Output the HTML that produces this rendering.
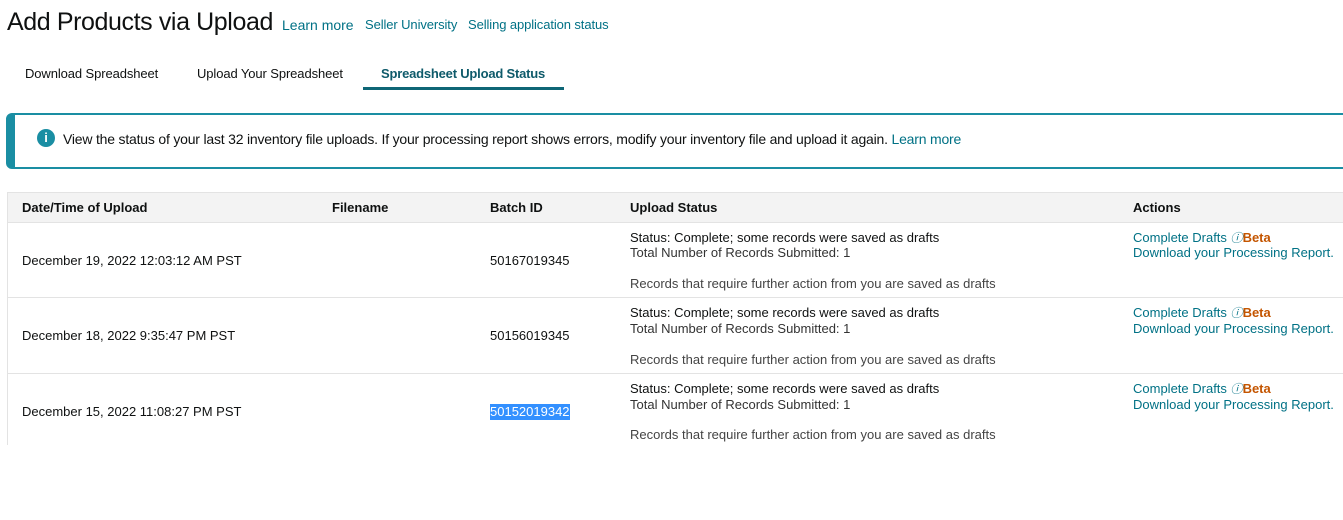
<!DOCTYPE html>
<html><head><meta charset="utf-8"><style>
*{margin:0;padding:0;box-sizing:border-box}
body{width:1343px;height:520px;background:#fff;font-family:"Liberation Sans",sans-serif;color:#0f1111;position:relative;overflow:hidden}
.a{position:absolute;white-space:nowrap;line-height:16px}
.l{color:#007185}
.s{font-size:13px}
.hd{font-size:13px;font-weight:bold;color:#0f1111}
.row{position:absolute;left:7px;width:1340px;border-top:1px solid #e3e3e3}
.ic{font-style:italic;font-size:12px;line-height:12px}
</style></head><body>
<div class="a" style="left:7px;top:8px;font-size:25px;line-height:28px;letter-spacing:-0.4px;color:#0f1111">Add Products via Upload</div>
<div class="a l" style="left:282px;top:17px;font-size:14px">Learn more</div>
<div class="a l" style="left:365px;top:17px;font-size:13px;letter-spacing:-0.1px">Seller University</div>
<div class="a l" style="left:468px;top:17px;font-size:13px;letter-spacing:-0.1px">Selling application status</div>

<div class="a" style="left:25px;top:66px;font-size:13px;letter-spacing:-0.1px">Download Spreadsheet</div>
<div class="a" style="left:197px;top:66px;font-size:13px;letter-spacing:-0.1px">Upload Your Spreadsheet</div>
<div class="a" style="left:381px;top:66px;font-size:13px;font-weight:bold;color:#0e5a6a;letter-spacing:-0.2px">Spreadsheet Upload Status</div>
<div class="a" style="left:363px;top:87px;width:201px;height:3px;background:#0e6676"></div>

<div class="a" style="left:6px;top:113px;width:1345px;height:56px;border:2px solid #1a8ea3;border-left:9px solid #1a8ea3;border-radius:6px 0 0 6px"></div>
<div class="a" style="left:37px;top:129px;width:18px;height:18px;border-radius:50%;background:#1a8ea3;color:#fff;font-weight:bold;font-size:13px;text-align:center;line-height:18px">i</div>
<div class="a" style="left:63px;top:131px;font-size:14px;letter-spacing:-0.2px">View the status of your last 32 inventory file uploads. If your processing report shows errors, modify your inventory file and upload it again. <span class="l">Learn more</span></div>

<div class="a" style="left:7px;top:192px;width:1340px;height:31px;background:#f3f3f3;border-top:1px solid #e3e3e3;border-bottom:1px solid #e3e3e3"></div>
<div class="a" style="left:7px;top:192px;width:1px;height:253px;background:#e3e3e3"></div>
<div class="a hd" style="left:22px;top:200px">Date/Time of Upload</div>
<div class="a hd" style="left:332px;top:200px">Filename</div>
<div class="a hd" style="left:490px;top:200px">Batch ID</div>
<div class="a hd" style="left:630px;top:200px">Upload Status</div>
<div class="a hd" style="left:1133px;top:200px">Actions</div>

<div class="row" style="top:297px"></div>
<div class="row" style="top:373px"></div>

<div class="a s" style="left:22px;top:253px">December 19, 2022 12:03:12 AM PST</div>
<div class="a s" style="left:490px;top:253px">50167019345</div>
<div class="a s" style="left:630px;top:230px">Status: Complete; some records were saved as drafts</div>
<div class="a s" style="left:630px;top:245px;color:#333">Total Number of Records Submitted: 1</div>
<div class="a s" style="left:630px;top:276px;color:#444">Records that require further action from you are saved as drafts</div>
<div class="a s l" style="left:1133px;top:230px">Complete Drafts <span class="ic">ⓘ</span><b style="color:#c45500">Beta</b></div>
<div class="a s l" style="left:1133px;top:245px">Download your Processing Report.</div>

<div class="a s" style="left:22px;top:328px">December 18, 2022 9:35:47 PM PST</div>
<div class="a s" style="left:490px;top:328px">50156019345</div>
<div class="a s" style="left:630px;top:305px">Status: Complete; some records were saved as drafts</div>
<div class="a s" style="left:630px;top:321px;color:#333">Total Number of Records Submitted: 1</div>
<div class="a s" style="left:630px;top:352px;color:#444">Records that require further action from you are saved as drafts</div>
<div class="a s l" style="left:1133px;top:305px">Complete Drafts <span class="ic">ⓘ</span><b style="color:#c45500">Beta</b></div>
<div class="a s l" style="left:1133px;top:321px">Download your Processing Report.</div>

<div class="a s" style="left:22px;top:404px">December 15, 2022 11:08:27 PM PST</div>
<div class="a s" style="left:490px;top:404px;background:#3390ff;color:#fff">50152019342</div>
<div class="a s" style="left:630px;top:381px">Status: Complete; some records were saved as drafts</div>
<div class="a s" style="left:630px;top:397px;color:#333">Total Number of Records Submitted: 1</div>
<div class="a s" style="left:630px;top:427px;color:#444">Records that require further action from you are saved as drafts</div>
<div class="a s l" style="left:1133px;top:381px">Complete Drafts <span class="ic">ⓘ</span><b style="color:#c45500">Beta</b></div>
<div class="a s l" style="left:1133px;top:397px">Download your Processing Report.</div>
</body></html>
